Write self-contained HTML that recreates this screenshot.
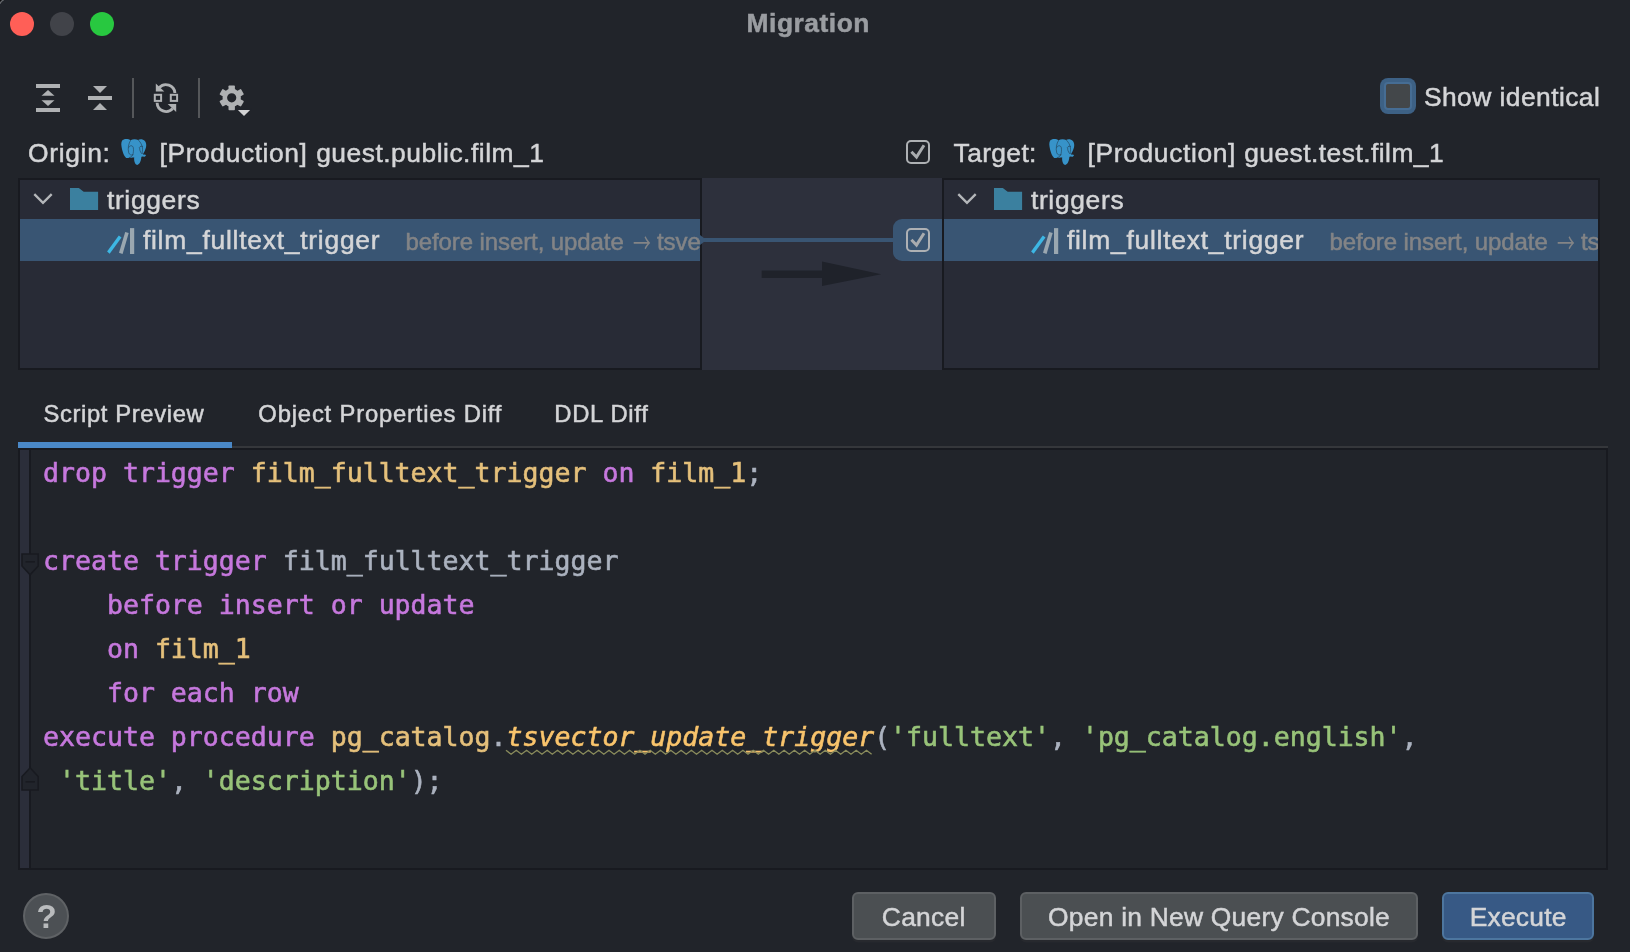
<!DOCTYPE html>
<html>
<head>
<meta charset="utf-8">
<title>Migration</title>
<style>
*{box-sizing:border-box;margin:0;padding:0}
html,body{width:1630px;height:952px;overflow:hidden;background:#21242a}
body{position:relative;font-family:"Liberation Sans",sans-serif;color:#d4d5d7;font-size:26.4px}
.abs{position:absolute}
.t{position:absolute;white-space:nowrap;line-height:1;-webkit-text-stroke:.5px}
.dot{position:absolute;top:12px;width:24px;height:24px;border-radius:50%}
.panel{position:absolute;top:178px;height:192px;background:#282b36;border:2px solid #181a20;overflow:hidden}
.row{position:absolute;left:0;right:0}
.sel{background:#395573}
.dim{color:#838486;font-size:24px}
.mono{font-family:"DejaVu Sans Mono","Liberation Mono",monospace;font-size:26.55px;line-height:44px;white-space:pre;position:absolute;left:43px;-webkit-text-stroke:.6px}
.f{color:#f9c46c}.k{color:#c678dd}.y{color:#e5c07b}.g{color:#98c379}.p{color:#abb2bf}
.btn{position:absolute;top:892px;height:48px;border-radius:6px;background:#4b4f52;border:2px solid #5d6063;box-shadow:0 2.5px 0 #27292e}
.bt{top:903.65px}
.cb{position:absolute;width:24px;height:24px;border:2px solid #aeb1b4;border-radius:5px}
</style>
</head>
<body>
<div id="wrap" style="position:absolute;left:0;top:0;width:1630px;height:952px;will-change:transform">
<!-- title bar -->
<div class="dot" style="left:10px;background:#ff5f57"></div>
<div class="dot" style="left:50px;background:#414349"></div>
<div class="dot" style="left:90px;background:#28c840"></div>
<div class="t" id="title" style="left:746.6px;top:9.75px;font-weight:bold;color:#9a9da1;letter-spacing:.509px">Migration</div>

<!-- toolbar -->

<!-- show identical -->
<div class="abs" style="left:1380px;top:78px;width:36px;height:36px;border-radius:8px;background:#3d6185"></div>
<div class="abs" style="left:1384px;top:82px;width:28px;height:28px;border-radius:4px;background:#43474a;border:2px solid #466d94"></div>
<div class="t" id="show" style="left:1423.9px;top:83.65px;letter-spacing:.445px">Show identical</div>

<!-- origin / target labels -->
<div class="t" id="lo1" style="left:28px;top:139.75px;letter-spacing:.684px">Origin:</div>
<div class="t" id="lo2a" style="left:159.6px;top:139.75px;letter-spacing:.591px">[Production]</div>
<div class="t" id="lo2b" style="left:316.2px;top:139.75px;letter-spacing:.506px">guest.public.film_1</div>
<div class="cb" style="left:906px;top:140px"></div>
<div class="t" id="lt1" style="left:953.6px;top:139.75px;letter-spacing:.359px">Target:</div>
<div class="t" id="lt2a" style="left:1087.6px;top:139.75px;letter-spacing:.636px">[Production]</div>
<div class="t" id="lt2b" style="left:1244.2px;top:139.75px;letter-spacing:.458px">guest.test.film_1</div>

<!-- panels -->
<div class="abs" style="left:701px;top:178px;width:242px;height:192px;background:#2d303c"></div>
<div class="panel" style="left:18px;width:684px">
  <div class="row" style="top:0;height:39px"><span class="t" id="trL" style="left:86.9px;top:7px;letter-spacing:.671px">triggers</span></div>
  <div class="row sel" style="top:38.8px;height:42px"><span class="t" id="ffL" style="left:122.9px;top:8.2px;letter-spacing:.761px">film_fulltext_trigger</span><span class="t dim" id="dim1" style="left:385.5px;top:10.9px;letter-spacing:-.095px">before insert, update</span><span class="t dim" id="dimA" style="left:612.5px;top:9.5px;font-family:'Noto Sans CJK SC',sans-serif;font-size:27px;-webkit-text-stroke:0;transform-origin:0 50%;transform:scaleX(.66)">→</span><span class="t dim" id="dim2" style="left:637px;top:10.9px;letter-spacing:-.095px">tsvector_update_trigger</span></div>
</div>
<div class="panel" style="left:942px;width:658px">
  <div class="row" style="top:0;height:39px"><span class="t" style="left:86.9px;top:7px;letter-spacing:.671px">triggers</span></div>
  <div class="row sel" style="top:38.8px;height:42px"><span class="t" style="left:122.9px;top:8.2px;letter-spacing:.761px">film_fulltext_trigger</span><span class="t dim" style="left:385.5px;top:10.9px;letter-spacing:-.095px">before insert, update</span><span class="t dim" style="left:612.5px;top:9.5px;font-family:'Noto Sans CJK SC',sans-serif;font-size:27px;-webkit-text-stroke:0;transform-origin:0 50%;transform:scaleX(.66)">→</span><span class="t dim" style="left:637px;top:10.9px;letter-spacing:-.095px">tsvector_update_trigger</span></div>
</div>
<!-- connector -->
<div class="abs" style="left:702px;top:238px;width:200px;height:4px;background:#395573"></div>
<div class="abs" style="left:893px;top:218.8px;width:49px;height:42px;border-radius:9px 0 0 9px;background:#395573"></div>
<div class="cb" style="left:906px;top:228px"></div>

<!-- tabs -->
<div class="t" id="tab1" style="left:43.5px;top:402.05px;font-size:23.8px;letter-spacing:.624px">Script Preview</div>
<div class="t" id="tab2" style="left:258.3px;top:402.05px;font-size:23.8px;letter-spacing:.828px">Object Properties Diff</div>
<div class="t" id="tab3" style="left:554.3px;top:402.05px;font-size:23.8px;letter-spacing:.704px">DDL Diff</div>
<div class="abs" style="left:18px;top:446px;width:1590px;height:2px;background:#35373b"></div>
<div class="abs" style="left:18px;top:442px;width:214px;height:6px;background:#4a88c7"></div>

<!-- editor -->
<div class="abs" style="left:18px;top:448px;width:1590px;height:421.5px;border:2px solid #181a20"></div>
<div class="abs" style="left:20px;top:450px;width:9px;height:417.5px;background:#2b2e3a"></div>
<div class="abs" style="left:29px;top:450px;width:2px;height:417.5px;background:#181a20"></div>
<div class="mono" style="top:450.7px"><span class="k" id="c1">drop trigger</span> <span class="y">film_fulltext_trigger</span> <span class="k">on</span> <span class="y">film_1</span><span class="p">;</span>

<span class="k">create trigger</span> <span class="p">film_fulltext_trigger</span>
    <span class="k">before insert or update</span>
    <span class="k">on</span> <span class="y">film_1</span>
    <span class="k">for each row</span>
<span class="k">execute procedure</span> <span class="y">pg_catalog</span><span class="p">.</span><i class="f">tsvector_update_trigger</i><span class="p">(</span><span class="g">'fulltext'</span><span class="p">,</span> <span class="g">'pg_catalog.english'</span><span class="p" id="c7">,</span>
 <span class="g">'title'</span><span class="p">,</span> <span class="g">'description'</span><span class="p">);</span></div>

<svg class="abs" style="left:0;top:0" width="1630" height="952" viewBox="0 0 1630 952">
<!-- window corner -->
<path fill="#0b0b0d" d="M0 0 L2.4 0 L0 2.4 Z"/>
<path fill="none" stroke="#74777a" stroke-width="1.3" stroke-linecap="round" d="M3.4 0 Q1.2 1.2 0 3.4" opacity=".85"/>
<!-- toolbar icons -->
<g fill="#afb1b3">
  <rect x="36" y="84" width="24" height="4"/>
  <rect x="36" y="108" width="24" height="4"/>
  <path d="M48 90 L54.5 95.8 L41.5 95.8 Z"/>
  <path d="M48 106 L54.5 100.2 L41.5 100.2 Z"/>
  <rect x="88" y="96" width="24" height="4"/>
  <path d="M100 93 L107 86 L93 86 Z"/>
  <path d="M100 103 L107 110 L93 110 Z"/>
</g>
<rect x="132" y="78" width="2" height="40" fill="#55575a"/>
<rect x="198" y="78" width="2" height="40" fill="#55575a"/>
<!-- refresh -->
<g fill="none" stroke="#afb1b3">
  <rect x="154.8" y="94.8" width="6.3" height="6.1" stroke-width="2"/>
  <rect x="170.8" y="94.8" width="6.3" height="6.1" stroke-width="2"/>
  <path stroke-width="2.9" d="M159.3 87.6 A9 9 0 0 1 174.9 93"/>
  <path stroke-width="2.9" d="M172.7 108.6 A9 9 0 0 1 157.1 102.8"/>
</g>
<path fill="#afb1b3" d="M155.8 83.5 L155.8 91.6 L164.3 91.6 Z"/>
<path fill="#afb1b3" d="M176.2 112.1 L176.2 104 L167.7 104 Z"/>
<!-- gear -->
<g transform="translate(231.7,97.8)" fill="#afb1b3">
  <circle r="6.9" fill="none" stroke="#afb1b3" stroke-width="4.6"/>
  <rect x="-3.2" y="-12.4" width="6.4" height="6" rx="0.8" transform="rotate(0)"/><rect x="-3.2" y="-12.4" width="6.4" height="6" rx="0.8" transform="rotate(60)"/><rect x="-3.2" y="-12.4" width="6.4" height="6" rx="0.8" transform="rotate(120)"/><rect x="-3.2" y="-12.4" width="6.4" height="6" rx="0.8" transform="rotate(180)"/><rect x="-3.2" y="-12.4" width="6.4" height="6" rx="0.8" transform="rotate(240)"/><rect x="-3.2" y="-12.4" width="6.4" height="6" rx="0.8" transform="rotate(300)"/>
</g>
<path fill="#21242b" d="M236 108.5 L252 108.5 L244 118 Z"/>
<path fill="#d2d3d4" d="M237.9 110 L250.1 110 L244 116 Z"/>
<!-- elephants -->
<g transform="translate(110,130) scale(0.042017)">
  <path fill="#3793c9" d="M300 240 C350 200 440 205 490 245 C540 215 620 215 670 240 C700 210 790 215 830 260 C880 320 870 420 820 510 C800 545 790 565 790 580 L860 595 L830 635 L760 630 L745 650 C740 720 720 810 645 835 C585 815 570 730 575 650 C560 655 500 665 460 660 C430 665 400 670 385 665 C330 620 290 500 275 400 C262 330 270 270 300 240 Z"/>
  <g fill="none" stroke="#1d2b3a" stroke-width="12" stroke-linecap="round">
    <path d="M487 250 C440 320 420 440 445 540 C460 590 500 605 545 590"/>
    <path d="M450 410 C470 360 540 360 555 420 C565 480 555 560 540 595 C520 630 490 650 465 655"/>
    <path d="M672 238 C740 300 790 400 770 510 C765 550 775 572 800 582"/>
    <path d="M700 410 C720 380 760 378 778 395"/>
    <path d="M706 425 C700 470 720 520 752 562"/>
  </g>
</g>
<g transform="translate(1038,130) scale(0.042017)">
  <path fill="#3793c9" d="M300 240 C350 200 440 205 490 245 C540 215 620 215 670 240 C700 210 790 215 830 260 C880 320 870 420 820 510 C800 545 790 565 790 580 L860 595 L830 635 L760 630 L745 650 C740 720 720 810 645 835 C585 815 570 730 575 650 C560 655 500 665 460 660 C430 665 400 670 385 665 C330 620 290 500 275 400 C262 330 270 270 300 240 Z"/>
  <g fill="none" stroke="#1d2b3a" stroke-width="12" stroke-linecap="round">
    <path d="M487 250 C440 320 420 440 445 540 C460 590 500 605 545 590"/>
    <path d="M450 410 C470 360 540 360 555 420 C565 480 555 560 540 595 C520 630 490 650 465 655"/>
    <path d="M672 238 C740 300 790 400 770 510 C765 550 775 572 800 582"/>
    <path d="M700 410 C720 380 760 378 778 395"/>
    <path d="M706 425 C700 470 720 520 752 562"/>
  </g>
</g>
<!-- tree icons -->
<g transform="translate(0,0)">
  <path fill="none" stroke="#b4b7ba" stroke-width="2.3" d="M34.3 194.1 L43 202.8 L51.7 194.1"/>
  <path fill="#3b809f" d="M70 187.9 L78.8 187.9 L83.7 191.7 L98.1 191.7 L98.1 210 L70 210 Z"/>
</g><g transform="translate(924,0)">
  <path fill="none" stroke="#b4b7ba" stroke-width="2.3" d="M34.3 194.1 L43 202.8 L51.7 194.1"/>
  <path fill="#3b809f" d="M70 187.9 L78.8 187.9 L83.7 191.7 L98.1 191.7 L98.1 210 L70 210 Z"/>
</g>
<g transform="translate(0,0)">
  <path fill="#3db7e4" d="M107.1 251.5 L109.7 253.7 L121.5 237.4 L118.8 235.6 Z"/>
  <path fill="#9aa7b0" d="M119 252.8 L122.6 254 L128.7 233 L125.2 232.1 Z"/>
  <rect fill="#9aa7b0" x="130" y="228.1" width="4.2" height="25.9"/>
</g><g transform="translate(924,0)">
  <path fill="#3db7e4" d="M107.1 251.5 L109.7 253.7 L121.5 237.4 L118.8 235.6 Z"/>
  <path fill="#9aa7b0" d="M119 252.8 L122.6 254 L128.7 233 L125.2 232.1 Z"/>
  <rect fill="#9aa7b0" x="130" y="228.1" width="4.2" height="25.9"/>
</g>
<!-- checks -->
<path fill="none" stroke="#a9acaf" stroke-width="3" d="M911.4 151.8 L916.5 157 L924 145.2"/>
<path fill="none" stroke="#a9acaf" stroke-width="3" d="M911.4 239.8 L916.5 245 L924 233.2"/>
<!-- middle arrow -->
<path fill="#1f222a" d="M761.7 270.4 L822 270.4 L822 261.6 L881.2 274.3 L822 286 L822 278 L761.7 278 Z"/>
<path fill="#395573" d="M700 235 L706.5 240 L700 245 Z"/>
<!-- wave -->
<path fill="none" stroke="#8a8c5c" stroke-width="1.4" d="M506.0 750.3 L511.1 754.2 L516.3 750.3 L521.4 754.2 L526.6 750.3 L531.7 754.2 L536.9 750.3 L542.0 754.2 L547.2 750.3 L552.3 754.2 L557.5 750.3 L562.6 754.2 L567.8 750.3 L572.9 754.2 L578.1 750.3 L583.2 754.2 L588.4 750.3 L593.5 754.2 L598.7 750.3 L603.8 754.2 L609.0 750.3 L614.1 754.2 L619.3 750.3 L624.4 754.2 L629.6 750.3 L634.7 754.2 L639.9 750.3 L645.0 754.2 L650.2 750.3 L655.3 754.2 L660.5 750.3 L665.6 754.2 L670.8 750.3 L675.9 754.2 L681.1 750.3 L686.2 754.2 L691.4 750.3 L696.5 754.2 L701.7 750.3 L706.8 754.2 L712.0 750.3 L717.1 754.2 L722.3 750.3 L727.4 754.2 L732.6 750.3 L737.7 754.2 L742.9 750.3 L748.0 754.2 L753.2 750.3 L758.3 754.2 L763.5 750.3 L768.6 754.2 L773.8 750.3 L778.9 754.2 L784.1 750.3 L789.2 754.2 L794.4 750.3 L799.5 754.2 L804.7 750.3 L809.8 754.2 L815.0 750.3 L820.1 754.2 L825.3 750.3 L830.4 754.2 L835.6 750.3 L840.7 754.2 L845.9 750.3 L851.0 754.2 L856.2 750.3 L861.3 754.2 L866.5 750.3 L871.6 754.2"/>
<!-- fold markers -->
<path fill="#21242b" stroke="#181a20" stroke-width="1.6" d="M22 554 L38.2 554 L38.2 566 L30.1 574.8 L22 566 Z"/>
<rect x="25.5" y="561" width="9.4" height="1.6" fill="#181a20"/>
<path fill="#21242b" stroke="#181a20" stroke-width="1.6" d="M22 790 L38.2 790 L38.2 776.5 L30.1 767.8 L22 776.5 Z"/>
<rect x="25.5" y="781" width="9.4" height="1.6" fill="#181a20"/>
</svg>
<!-- bottom -->
<div class="abs" style="left:23px;top:893px;width:46px;height:46px;border-radius:50%;background:#4c5054;border:2px solid #5f6265"></div>
<div class="t" id="q" style="left:36.5px;top:900px;color:#b9bbbd;font-weight:bold;font-size:33px;-webkit-text-stroke:0">?</div>
<div class="btn" style="left:852px;width:144px"></div>
<div class="btn" style="left:1020px;width:398px"></div>
<div class="btn" style="left:1442px;width:152px;background:#375985;border-color:#4d769f"></div>
<div class="t bt" id="cancel" style="left:881.8px;letter-spacing:.283px">Cancel</div>
<div class="t bt" id="open" style="left:1048.1px;letter-spacing:.236px">Open in New Query Console</div>
<div class="t bt" id="exec" style="left:1469.7px;letter-spacing:.22px">Execute</div>
</div>
</body>
</html>
